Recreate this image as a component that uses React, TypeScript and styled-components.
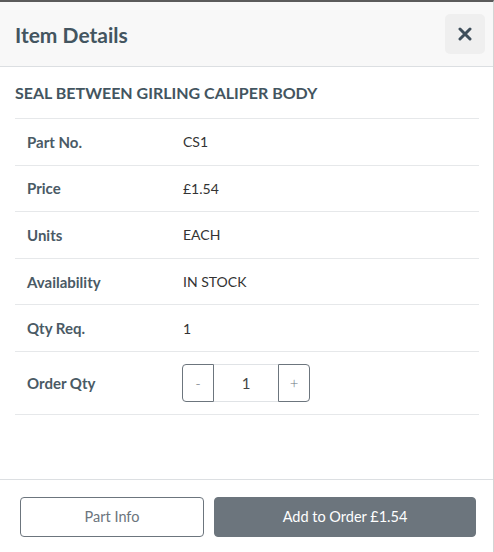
import React from "react"
import styled, { createGlobalStyle } from "styled-components"

const GlobalStyle = createGlobalStyle`
  html, body { margin: 0; padding: 0; height: 100%; background: #fff; }
  #root { height: 100%; }
  * { box-sizing: border-box; }
`

const Modal = styled.div`
  height: 100vh;
  display: flex;
  flex-direction: column;
  border-top: 2px solid #5b5b5b;
  border-right: 1px solid #d4d4d4;
  font-family: Lato, "Open Sans", sans-serif;
  color: #333;
`

const Header = styled.div`
  height: 65px;
  background: #f8f8f8;
  border-bottom: 1px solid #dcdfe2;
  display: flex;
  align-items: center;
  justify-content: space-between;
  padding: 0 8px 0 15px;
`

const Title = styled.h2`
  margin: 0;
  font-size: 21px;
  font-weight: 700;
  color: #435560;
`

const CloseButton = styled.button`
  width: 40px;
  height: 40px;
  border: none;
  border-radius: 5px;
  background: #efefef;
  display: flex;
  align-items: center;
  justify-content: center;
  padding: 0;
  margin-top: -1px;
`

const Body = styled.div`
  flex: 1;
  padding: 15px 14px 0 15px;
`

const PartName = styled.h3`
  margin: 0 0 14px;
  font-size: 16px;
  font-weight: 700;
  color: #435560;
  text-transform: uppercase;
  line-height: 22px;
`

const Table = styled.div`
  border-bottom: 1px solid #e6e8ea;
`

const Row = styled.div<{ $tall?: boolean }>`
  display: grid;
  grid-template-columns: 156px 1fr;
  align-items: center;
  border-top: 1px solid #e6e8ea;
  height: ${p => (p.$tall ? "63px" : "46.6px")};
`

const Label = styled.div`
  padding-left: 12px;
  font-size: 15px;
  font-weight: 700;
  color: #4a5a65;
`

const Value = styled.div`
  padding-left: 12px;
  font-size: 14px;
  color: #333;
`

const QtyGroup = styled.div`
  display: flex;
  height: 38px;
  width: 128px;
  margin-left: 11px;
`

const StepButton = styled.button<{ $side: "left" | "right" }>`
  width: 32px;
  height: 38px;
  border: 1px solid #6c757d;
  background: #fff;
  color: #6c757d;
  font-family: Lato, sans-serif;
  font-size: 15px;
  font-weight: 300;
  padding: 0;
  border-radius: ${p => (p.$side === "left" ? "4px 0 0 4px" : "0 4px 4px 0")};
`

const QtyInput = styled.input`
  width: 64px;
  height: 38px;
  border: 1px solid #e0e3e6;
  border-left: none;
  border-right: none;
  text-align: center;
  font-family: Lato, sans-serif;
  font-size: 15px;
  color: #444;
  outline: none;
`

const Footer = styled.div`
  height: 73px;
  border-top: 1px solid #dcdfe2;
  display: flex;
  align-items: center;
  gap: 10px;
  padding: 0 17px 0 20px;
`

const FooterButton = styled.button<{ $primary?: boolean }>`
  height: 40px;
  width: ${p => (p.$primary ? "262px" : "184px")};
  border-radius: 4px;
  border: 1px solid #6c757d;
  background: ${p => (p.$primary ? "#6c757d" : "#fff")};
  color: ${p => (p.$primary ? "#fff" : "#6c757d")};
  font-family: Lato, sans-serif;
  font-size: 14.5px;
  margin-top: 1px;
`

const details = [
  { label: "Part No.", value: "CS1" },
  { label: "Price", value: "£1.54" },
  { label: "Units", value: "EACH" },
  { label: "Availability", value: "IN STOCK" },
  { label: "Qty Req.", value: "1" },
]

const App = () => (
  <>
    <GlobalStyle />
    <Modal>
      <Header>
        <Title>Item Details</Title>
        <CloseButton aria-label="Close">
          <svg width="14" height="14" viewBox="0 0 14 14">
            <path d="M2 2L12 12M12 2L2 12" stroke="#3f4f5b" strokeWidth="3" strokeLinecap="round" />
          </svg>
        </CloseButton>
      </Header>
      <Body>
        <PartName>Seal between Girling caliper body</PartName>
        <Table>
          {details.map(d => (
            <Row key={d.label}>
              <Label>{d.label}</Label>
              <Value>{d.value}</Value>
            </Row>
          ))}
          <Row $tall>
            <Label>Order Qty</Label>
            <QtyGroup>
              <StepButton $side="left">-</StepButton>
              <QtyInput defaultValue="1" />
              <StepButton $side="right">+</StepButton>
            </QtyGroup>
          </Row>
        </Table>
      </Body>
      <Footer>
        <FooterButton>Part Info</FooterButton>
        <FooterButton $primary>Add to Order £1.54</FooterButton>
      </Footer>
    </Modal>
  </>
)

export default App
